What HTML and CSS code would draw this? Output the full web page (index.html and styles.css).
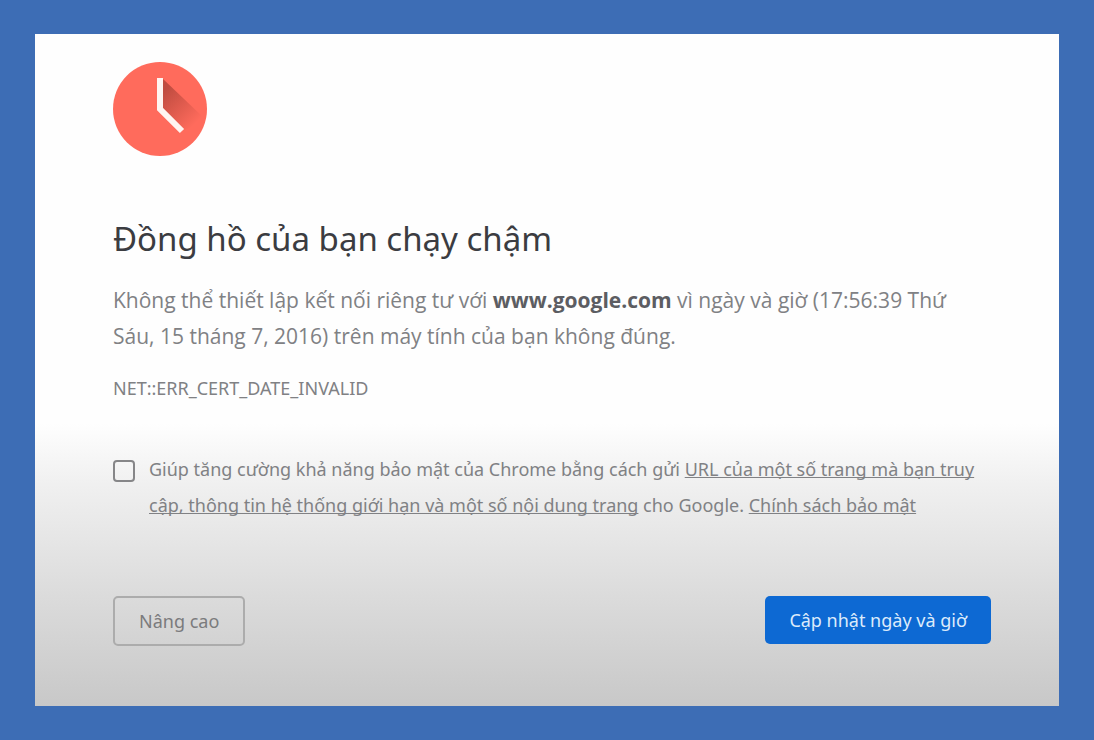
FILE: index.html
```html
<!DOCTYPE html>
<html lang="vi">
<head>
    <meta charset="UTF-8">
    <meta name="viewport" content="width=device-width, initial-scale=1.0">
    <title>Đồng hồ của bạn chạy chậm</title>
    <link rel="stylesheet" href="styles.css">
</head>
<body>
    <main class="panel">
        <svg class="clock" viewBox="0 0 94 94" aria-hidden="true">
            <defs>
                <linearGradient id="shadow" gradientUnits="userSpaceOnUse" x1="50" y1="30" x2="82" y2="62">
                    <stop offset="0" stop-color="#c04c40"/>
                    <stop offset="1" stop-color="#ff6b5c"/>
                </linearGradient>
            </defs>
            <circle cx="47" cy="47" r="47" fill="#ff6b5c"/>
            <path d="M50 17 L90 55 Q82 66 70 68 L47 47 Z" fill="url(#shadow)"/>
            <path d="M47 16 V47 L69 69" fill="none" stroke="#fff5f1" stroke-width="6"/>
        </svg>
        <h1>Đồng hồ của bạn chạy chậm</h1>
        <p class="message">Không thể thiết lập kết nối riêng tư với <strong>www.google.com</strong> vì ngày và giờ (17:56:39 Thứ Sáu, 15 tháng 7, 2016) trên máy tính của bạn không đúng.</p>
        <p class="error-code">NET::ERR_CERT_DATE_INVALID</p>
        <div class="opt-in">
            <input type="checkbox" id="reporting">
            <label for="reporting">Giúp tăng cường khả năng bảo mật của Chrome bằng cách gửi <a href="#">URL của một số trang mà bạn truy cập, thông tin hệ thống giới hạn và một số nội dung trang</a> cho Google. <a href="#">Chính sách bảo mật</a></label>
        </div>
        <div class="buttons">
            <button type="button" class="secondary">Nâng cao</button>
            <button type="button" class="primary">Cập nhật ngày và giờ</button>
        </div>
    </main>
</body>
</html>
```
FILE: styles.css
```css
* {
    box-sizing: border-box;
}
body {
    margin: 0;
    min-height: 100vh;
    padding: 34px 35px;
    display: flex;
    background-color: #3d6db5;
    color: #808184;
    font-family: "Noto Sans", "Open Sans", sans-serif;
}
.panel {
    flex: 1;
    padding: 28px 68px 58px 78px;
    background: linear-gradient(#fefefe 58%, #f0f0f0 67%, #dcdcdc 83%, #c8c8c8);
}
.clock {
    display: block;
    width: 94px;
    height: 94px;
}
h1 {
    margin: 60px 0 0;
    color: #3b3c41;
    font-size: 33px;
    font-weight: 400;
    line-height: 46px;
}
p {
    margin: 0;
}
.message {
    margin-top: 20px;
    font-family: "Open Sans", "Noto Sans", sans-serif;
    font-size: 21px;
    line-height: 36px;
}
strong {
    color: #5c5d62;
}
.error-code {
    margin-top: 20px;
    font-size: 18px;
    line-height: 28px;
}
.opt-in {
    display: flex;
    align-items: flex-start;
    gap: 14px;
    margin-top: 49px;
    font-size: 18px;
    line-height: 36px;
}
.opt-in input {
    appearance: none;
    flex: none;
    width: 22px;
    height: 22px;
    margin: 9px 0 0;
    border: 2px solid #868688;
    border-radius: 4px;
}
a {
    color: inherit;
    text-decoration: underline;
    text-decoration-skip-ink: none;
}
.buttons {
    display: flex;
    justify-content: space-between;
    align-items: flex-start;
    margin-top: 73px;
}
button {
    border: none;
    border-radius: 5px;
    padding: 12px 24px;
    font-family: inherit;
    font-size: 18px;
    line-height: 24px;
    cursor: pointer;
}
.secondary {
    padding: 11px 24px;
    border: 2px solid #acacac;
    background-color: transparent;
    color: #7b7b7d;
}
.primary {
    background-color: #0d69d3;
    color: #dcebfb;
}
```
